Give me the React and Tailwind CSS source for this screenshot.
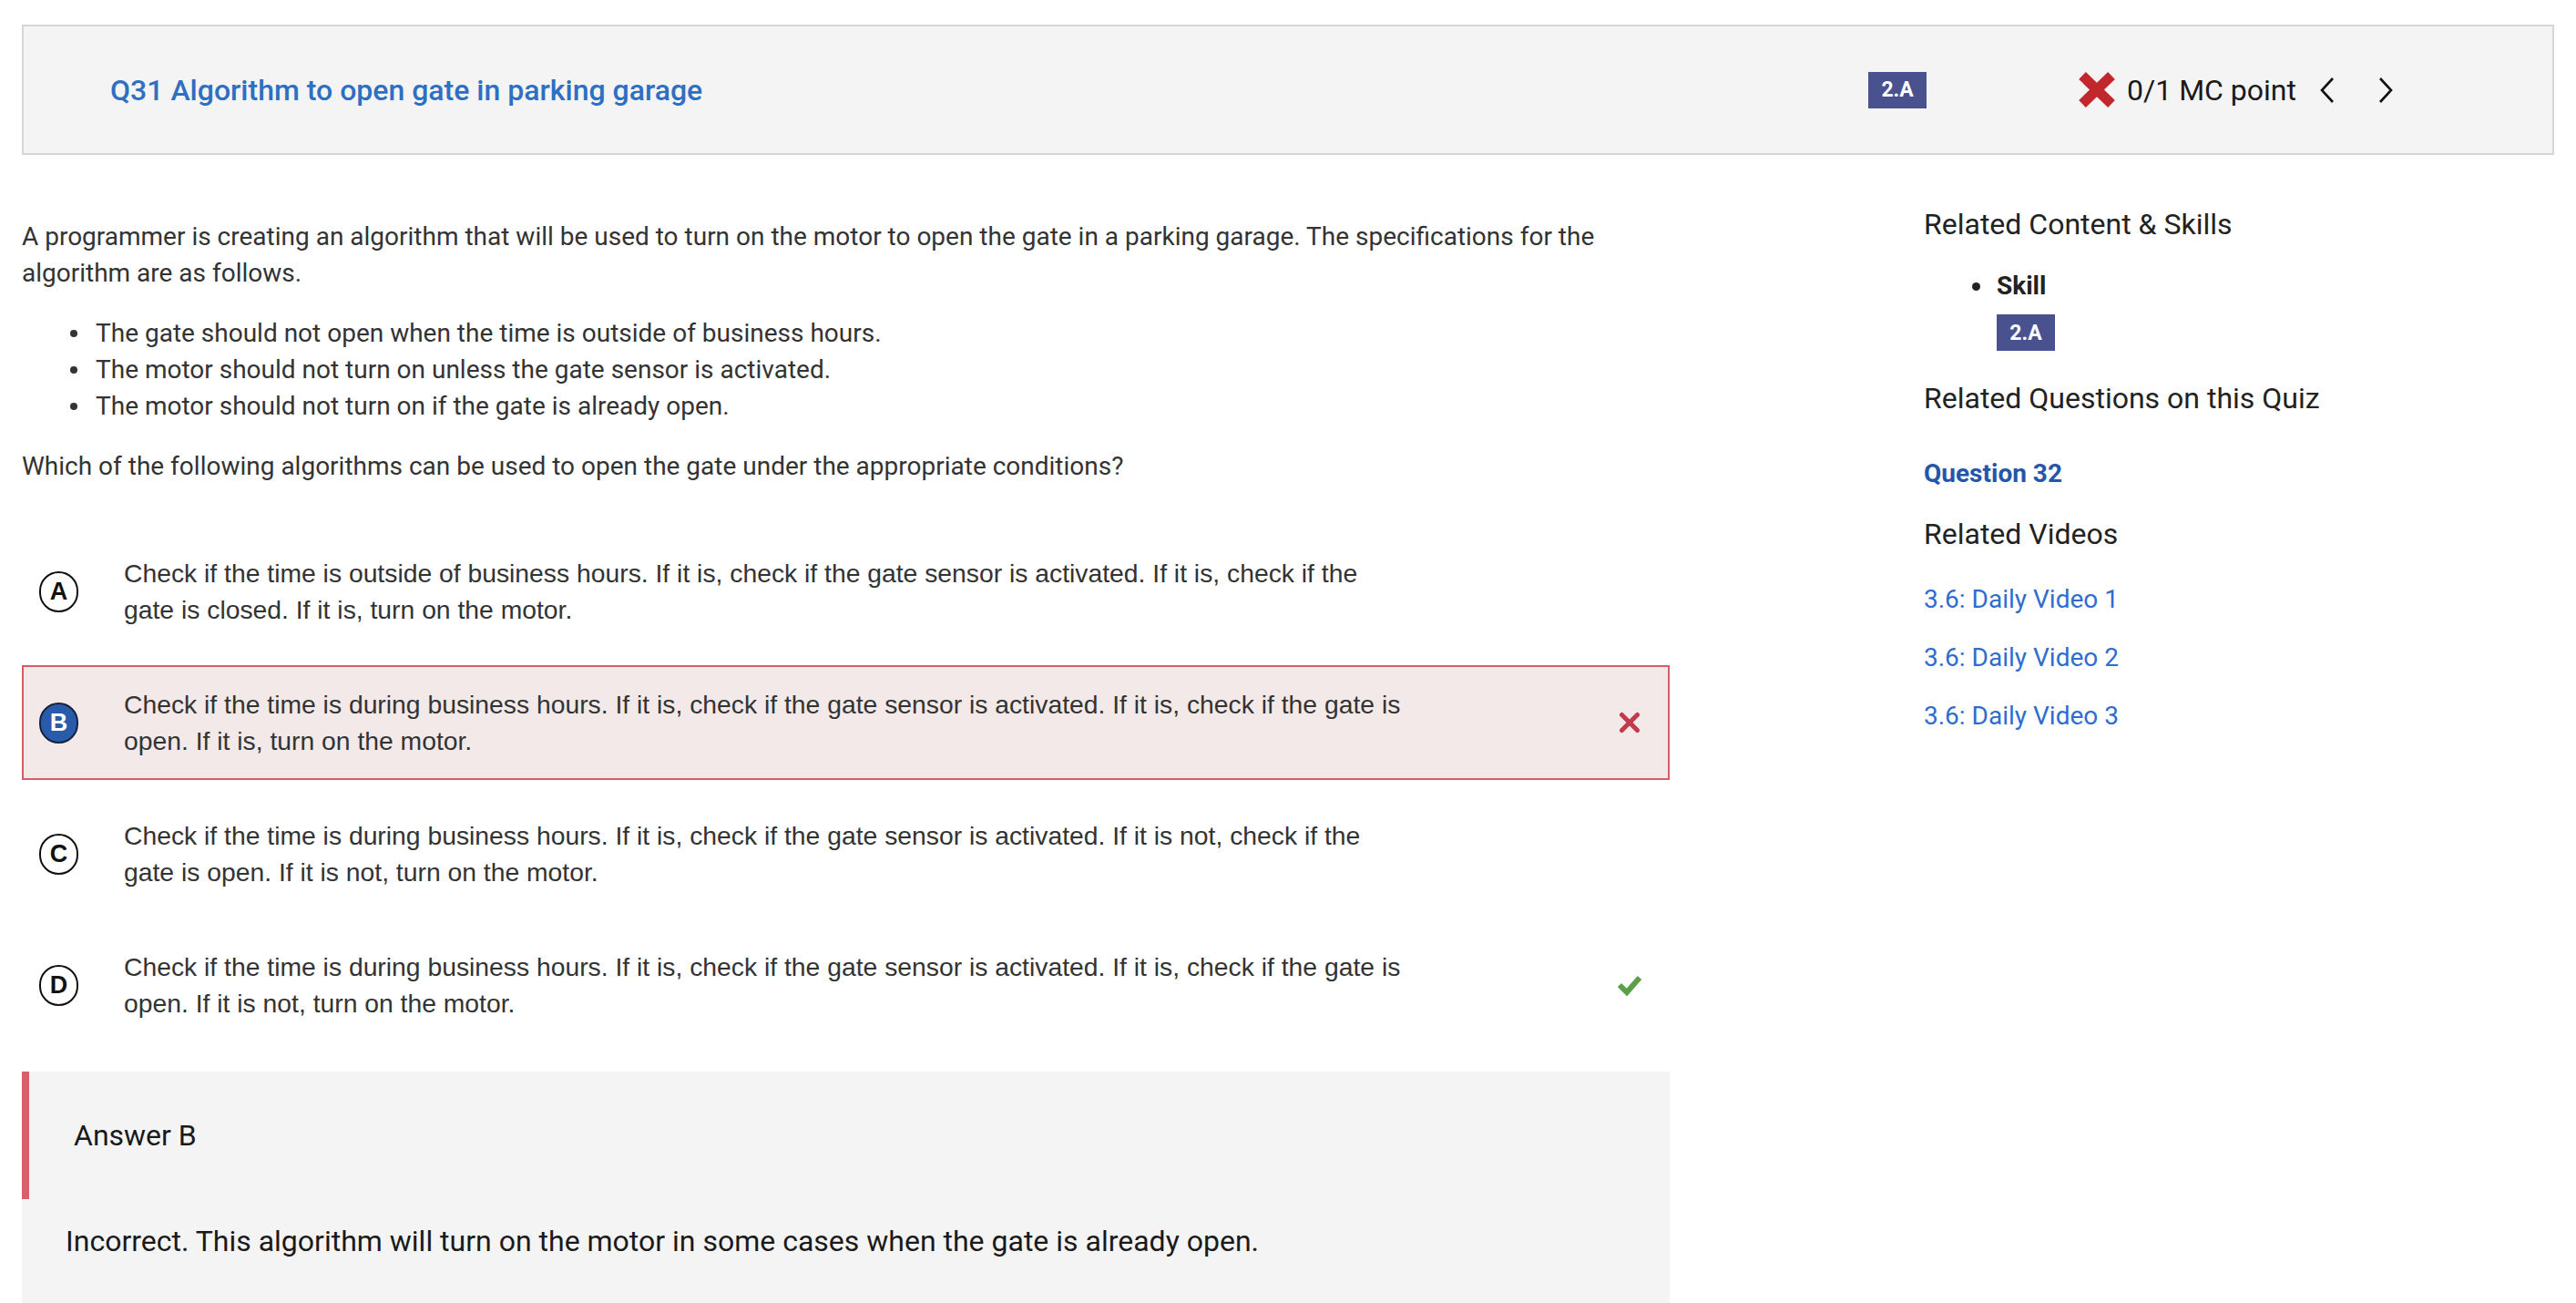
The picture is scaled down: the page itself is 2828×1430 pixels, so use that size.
import React from "react";

const OPTIONS = [
  { letter: "A", text: "Check if the time is outside of business hours. If it is, check if the gate sensor is activated. If it is, check if the gate is closed. If it is, turn on the motor." },
  { letter: "B", text: "Check if the time is during business hours. If it is, check if the gate sensor is activated. If it is, check if the gate is open. If it is, turn on the motor.", chosen: true },
  { letter: "C", text: "Check if the time is during business hours. If it is, check if the gate sensor is activated. If it is not, check if the gate is open. If it is not, turn on the motor." },
  { letter: "D", text: "Check if the time is during business hours. If it is, check if the gate sensor is activated. If it is, check if the gate is open. If it is not, turn on the motor.", correct: true },
];

const SPECS = [
  "The gate should not open when the time is outside of business hours.",
  "The motor should not turn on unless the gate sensor is activated.",
  "The motor should not turn on if the gate is already open.",
];

function Badge() {
  return (
    <span className="inline-flex items-center justify-center w-[64px] h-[40px] bg-[#49518f] text-white text-[23px] font-bold leading-none">
      2.A
    </span>
  );
}

function BigX() {
  return (
    <svg width="40" height="39" viewBox="0 0 40 39">
      <g stroke="#c1272d" strokeWidth="11" strokeLinecap="butt">
        <line x1="4" y1="4" x2="36" y2="35" />
        <line x1="36" y1="4" x2="4" y2="35" />
      </g>
    </svg>
  );
}

function Chevron({ dir }) {
  return (
    <svg width="20" height="30" viewBox="0 0 20 30">
      <polyline
        points={dir === "left" ? "16,2 4,15 16,28" : "4,2 16,15 4,28"}
        fill="none"
        stroke="#111"
        strokeWidth="2.6"
      />
    </svg>
  );
}

function SmallX() {
  return (
    <svg width="26" height="26" viewBox="0 0 26 26">
      <g stroke="#c23a4b" strokeWidth="5" strokeLinecap="round">
        <line x1="4.5" y1="4.5" x2="21.5" y2="21.5" />
        <line x1="21.5" y1="4.5" x2="4.5" y2="21.5" />
      </g>
    </svg>
  );
}

function Check() {
  return (
    <svg width="28" height="24" viewBox="0 0 28 24">
      <polyline points="3,12 11,20 25,4" fill="none" stroke="#5b9f49" strokeWidth="6" />
    </svg>
  );
}

function Option({ o }) {
  return (
    <div
      className={
        "flex items-center border-2 pl-[17px] pr-[28px] py-[21px] " +
        (o.chosen ? "border-[#d65c66] bg-[#f4e9e9]" : "border-transparent")
      }
    >
      <span
        className={
          "w-[43px] h-[45px] rounded-full border-2 flex items-center justify-center text-[27px] font-bold shrink-0 " +
          (o.chosen ? "bg-[#2a5bab] border-[#16233f] text-white" : "border-[#111] text-[#111]")
        }
        style={{ fontFamily: '"Liberation Sans", Arial, sans-serif' }}
      >
        {o.letter}
      </span>
      <p
        className="ml-[50px] w-[1412px] text-[28.3px] leading-[40px] text-[#333]"
        style={{ fontFamily: '"Liberation Sans", Arial, sans-serif' }}
      >
        {o.text}
      </p>
      <div className="ml-auto w-[28px] flex justify-center">
        {o.chosen && <SmallX />}
        {o.correct && <Check />}
      </div>
    </div>
  );
}

export default function App() {
  return (
    <div className="min-h-screen bg-white text-[#333] overflow-hidden" style={{ fontFamily: 'Roboto, "Noto Sans", sans-serif' }}>
      {/* header */}
      <div className="mx-[24px] mt-[27px] h-[143px] border-2 border-[#d6d6da] bg-[#f4f4f4] flex items-center pl-[95px] pr-[173px]">
        <h1 className="flex-1 text-[32px] font-medium text-[#2f6fc2] leading-none">
          Q31 Algorithm to open gate in parking garage
        </h1>
        <Badge />
        <div className="ml-[167px] flex items-center">
          <BigX />
          <span className="ml-[13px] text-[32px] text-[#1a1a1a] leading-none">0/1 MC point</span>
          <span className="ml-[24px] flex"><Chevron dir="left" /></span>
          <span className="ml-[44px] flex"><Chevron dir="right" /></span>
        </div>
      </div>

      <div className="flex pl-[24px]">
        {/* main column */}
        <div className="w-[1809px] shrink-0 pt-[70px]">
          <p className="text-[28px] leading-[40px]">
            A programmer is creating an algorithm that will be used to turn on the motor to open the gate in a parking garage. The specifications for the algorithm are as follows.
          </p>
          <ul className="mt-[26px] pl-[53px]">
            {SPECS.map((s) => (
              <li key={s} className="flex items-center text-[28px] leading-[40px]">
                <span className="w-[8px] h-[8px] rounded-full bg-[#333] mr-[20px] shrink-0" />
                {s}
              </li>
            ))}
          </ul>
          <p className="mt-[26px] text-[28px] leading-[40px]">
            Which of the following algorithms can be used to open the gate under the appropriate conditions?
          </p>

          <div className="mt-[54px] flex flex-col gap-[18px]">
            {OPTIONS.map((o) => (
              <Option key={o.letter} o={o} />
            ))}
          </div>

          {/* answer panel */}
          <div className="mt-[32px] bg-[#f4f4f4]">
            <div className="h-[140px] border-l-[8px] border-[#d9606b] flex items-center pl-[49px]">
              <span className="text-[32px] text-[#1a1a1a]">Answer B</span>
            </div>
            <p className="pl-[48px] pt-[24px] pb-[60px] text-[32px] leading-[44px] text-[#1a1a1a]">
              Incorrect. This algorithm will turn on the motor in some cases when the gate is already open.
            </p>
          </div>
        </div>

        {/* sidebar */}
        <div className="ml-[279px] flex-1 pt-[56px]">
          <h2 className="text-[32px] leading-[40px] text-[#222]">Related Content &amp; Skills</h2>
          <div className="mt-[30px] pl-[53px]">
            <div className="flex items-center h-[36px]">
              <span className="w-[9px] h-[9px] rounded-full bg-[#222] mr-[18px]" />
              <span className="text-[28px] font-bold text-[#222]">Skill</span>
            </div>
            <div className="mt-[13px] ml-[27px]">
              <Badge />
            </div>
          </div>
          <h2 className="mt-[32px] text-[32px] leading-[40px] text-[#222]">Related Questions on this Quiz</h2>
          <div className="mt-[45px] text-[28px] leading-[36px] font-bold text-[#2556a8]">Question 32</div>
          <h2 className="mt-[28px] text-[32px] leading-[40px] text-[#222]">Related Videos</h2>
          <div className="mt-[34px] flex flex-col gap-[28px]">
            {[1, 2, 3].map((n) => (
              <div key={n} className="text-[28px] leading-[36px] text-[#2e6dcf]">
                3.6: Daily Video {n}
              </div>
            ))}
          </div>
        </div>
      </div>
    </div>
  );
}
